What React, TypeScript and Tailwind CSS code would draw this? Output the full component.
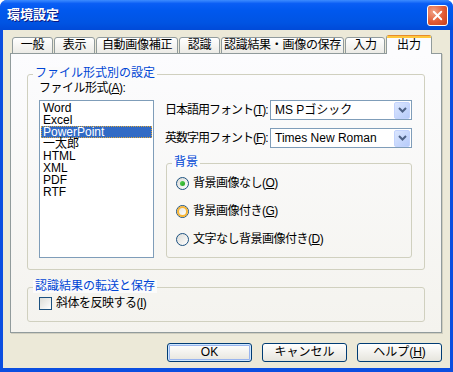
import { X } from 'lucide-react'

const font = "font-['Liberation_Sans','Noto_Sans_CJK_JP',sans-serif]"

const tabs = ['一般', '表示', '自動画像補正', '認識', '認識結果・画像の保存', '入力']
const tabWidths = ['w-[41px]', 'w-[41px]', 'w-[82px]', 'w-[41px]', 'w-[123px]', 'w-[40px]']

const formats = ['Word', 'Excel', 'PowerPoint', '一太郎', 'HTML', 'XML', 'PDF', 'RTF']

function Mn({ children }: { children: string }) {
  return <span className="underline underline-offset-[1px]">{children}</span>
}

function Group({ title, className, children }: { title: string; className: string; children: React.ReactNode }) {
  return (
    <div className={`relative rounded-[3px] border border-[#d0d0bf] ${className}`}>
      <span className="absolute -top-[8px] left-[5px] whitespace-nowrap bg-[#fbfbfb] px-[2px] text-[12px] leading-[13px] text-[#0046d5]">
        {title}
      </span>
      {children}
    </div>
  )
}

function Combo({ value }: { value: string }) {
  return (
    <div className="flex h-[20px] w-[142px] items-center border border-[#7f9db9] bg-white pl-[4px] pr-px">
      <span className="flex-1 whitespace-nowrap text-[12px] leading-[13px] text-black">{value}</span>
      <div className="flex h-[17px] w-[16px] items-center justify-center rounded-[2px] border border-[#c3d3fd] bg-gradient-to-br from-[#dbe6fe] to-[#b6cbfa]">
        <svg width="9" height="6" viewBox="0 0 9 6">
          <path d="M1 1 L4.5 4.5 L8 1" fill="none" stroke="#4d6185" strokeWidth="2" />
        </svg>
      </div>
    </div>
  )
}

function Radio({ state, label, mn }: { state: 'on' | 'hot' | 'off'; label: string; mn: string }) {
  return (
    <div className="flex items-center gap-[4px]">
      <div className="flex h-[13px] w-[13px] items-center justify-center rounded-full border border-[#1c5180] bg-gradient-to-br from-[#dcdcd7] to-white">
        {state === 'on' && (
          <div className="h-[5px] w-[5px] rounded-full bg-gradient-to-br from-[#55d551] to-[#21a121]" />
        )}
        {state === 'hot' && (
          <div className="h-[11px] w-[11px] rounded-full border-2 border-[#f8b636] bg-gradient-to-br from-[#e6e6e0] to-white" />
        )}
      </div>
      <span className="whitespace-nowrap text-[12px] leading-[13px] tracking-[-0.5px]">
        {label}(<Mn>{mn}</Mn>)
      </span>
    </div>
  )
}

function Button({ label, isDefault }: { label: React.ReactNode; isDefault?: boolean }) {
  return (
    <div
      className={`flex h-[19px] w-[85px] items-center justify-center rounded-[3px] border border-[#003c74] bg-gradient-to-b from-white to-[#e6e5dd] text-[12px] leading-[13px] ${
        isDefault ? 'shadow-[inset_0_0_0_1px_#cee7ff,inset_0_0_0_2px_#98b4ee]' : ''
      }`}
    >
      {label}
    </div>
  )
}

export default function App() {
  return (
    <div className={`flex h-[372px] w-[453px] flex-col overflow-hidden rounded-t-[7px] bg-[#0b4ee0] text-black ${font}`}>
      {/* Title bar */}
      <div className="flex h-[30px] shrink-0 items-center justify-between bg-[linear-gradient(to_bottom,#3d8cff_0%,#0a5ef5_12%,#0058ee_35%,#0054e3_75%,#004ad8_100%)] pl-[7px] pr-[5px]">
        <span className="text-[13px] font-bold leading-[14px] text-white [text-shadow:1px_1px_#0a1883]">環境設定</span>
        <div className="flex h-[21px] w-[21px] items-center justify-center rounded-[3px] border border-white bg-[radial-gradient(circle_at_30%_30%,#f0a287_0%,#e25a33_55%,#c4401c_100%)]">
          <X className="h-[15px] w-[15px] text-white" strokeWidth={3} />
        </div>
      </div>

      {/* Body */}
      <div className="mx-[3px] mb-[4px] flex flex-1 flex-col bg-[#ece9d8] pl-[7px] pr-[8px] pt-[5px]">
        {/* Tabs */}
        <div className="relative z-10 -mb-px flex h-[19px] items-end gap-px pl-[2px]">
          {tabs.map((t, i) => (
            <div
              key={t}
              className={`${tabWidths[i]} flex h-[17px] items-center justify-center whitespace-nowrap rounded-t-[3px] border border-[#919b9c] bg-gradient-to-b from-white to-[#ecebe6] text-[12px] leading-[13px] tracking-[-0.3px]`}
            >
              {t}
            </div>
          ))}
          <div className="flex h-[19px] w-[46px] flex-col overflow-hidden rounded-t-[3px] border-x border-[#919b9c] bg-[#fcfcfe]">
            <div className="h-[3px] shrink-0 border-t border-[#e68b2c] bg-[#ffc73c]" />
            <div className="flex flex-1 items-center justify-center pb-px text-[12px] leading-[13px]">出力</div>
          </div>
        </div>

        {/* Panel */}
        <div className="flex h-[280px] flex-col border border-[#919b9c] bg-gradient-to-b from-[#fcfcfe] to-[#f4f3ee] px-[16px] pt-[20px] shadow-[1px_1px_0_#d0cebf]">
          <Group title="ファイル形式別の設定" className="flex h-[196px] gap-[11px] pl-[11px] pr-[12px] pt-[7px]">
            <div className="flex flex-col">
              <span className="whitespace-nowrap text-[12px] leading-[13px] tracking-[-0.5px]">
                ファイル形式(<Mn>A</Mn>):
              </span>
              <div className="mt-[5px] flex h-[158px] w-[115px] flex-col border border-[#7f9db9] bg-white px-px pt-[1px]">
                {formats.map((f) => (
                  <div
                    key={f}
                    className={`h-[12px] whitespace-nowrap pl-[2px] text-[12px] leading-[12px] ${
                      f === 'PowerPoint' ? 'bg-[#316ac5] text-white outline-1 outline-dotted -outline-offset-1 outline-[#d9a640]' : ''
                    }`}
                  >
                    {f}
                  </div>
                ))}
              </div>
            </div>

            <div className="flex flex-1 flex-col pt-[18px]">
              <div className="flex items-center">
                <span className="w-[105px] whitespace-nowrap text-[12px] leading-[13px] tracking-[-1px]">
                  日本語用フォント(<Mn>T</Mn>):
                </span>
                <Combo value="MS Pゴシック" />
              </div>
              <div className="mt-[8px] flex items-center">
                <span className="w-[105px] whitespace-nowrap text-[12px] leading-[13px] tracking-[-1px]">
                  英数字用フォント(<Mn>F</Mn>):
                </span>
                <Combo value="Times New Roman" />
              </div>
              <Group title="背景" className="ml-px mt-[15px] flex h-[95px] flex-col gap-[15px] pl-[9px] pt-[13px]">
                <Radio state="on" label="背景画像なし" mn="O" />
                <Radio state="hot" label="背景画像付き" mn="G" />
                <Radio state="off" label="文字なし背景画像付き" mn="D" />
              </Group>
            </div>
          </Group>

          <Group title="認識結果の転送と保存" className="mt-[17px] flex h-[35px] items-start gap-[4px] pl-[11px] pt-[9px]">
            <div className="h-[13px] w-[13px] border border-[#1c5180] bg-gradient-to-br from-[#dcdcd7] to-white" />
            <span className="whitespace-nowrap text-[12px] leading-[13px] tracking-[-0.5px]">
              斜体を反映する(<Mn>I</Mn>)
            </span>
          </Group>
        </div>

        {/* Buttons */}
        <div className="mt-[10px] flex justify-end gap-[10px]">
          <Button label="OK" isDefault />
          <Button label="キャンセル" />
          <Button
            label={
              <span>
                ヘルプ(<Mn>H</Mn>)
              </span>
            }
          />
        </div>
      </div>
    </div>
  )
}
